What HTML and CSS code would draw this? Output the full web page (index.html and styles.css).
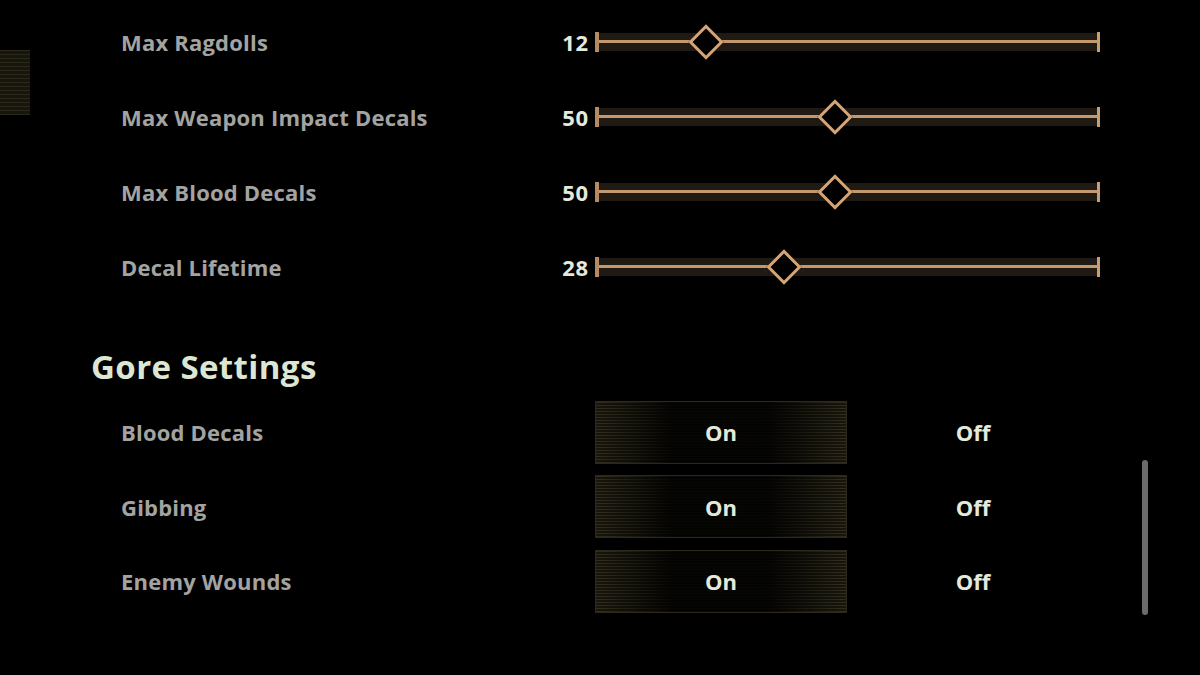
FILE: index.html
```html
<!DOCTYPE html>
<html>
<head>
<meta charset="utf-8">
<link rel="stylesheet" href="styles.css">
</head>
<body>
<div class="side-tab"></div>
<main class="panel">
  <section class="sliders">
    <div class="row">
      <div class="label">Max Ragdolls</div>
      <div class="value">12</div>
      <div class="slider"><div class="track"></div><div class="knob" style="left:21.5%"></div></div>
    </div>
    <div class="row">
      <div class="label">Max Weapon Impact Decals</div>
      <div class="value">50</div>
      <div class="slider"><div class="track"></div><div class="knob" style="left:47.4%"></div></div>
    </div>
    <div class="row">
      <div class="label">Max Blood Decals</div>
      <div class="value">50</div>
      <div class="slider"><div class="track"></div><div class="knob" style="left:47.4%"></div></div>
    </div>
    <div class="row">
      <div class="label">Decal Lifetime</div>
      <div class="value">28</div>
      <div class="slider"><div class="track"></div><div class="knob" style="left:37.1%"></div></div>
    </div>
  </section>
  <h2 class="heading">Gore Settings</h2>
  <section class="toggles">
    <div class="trow">
      <div class="label">Blood Decals</div>
      <div class="opt selected">On</div>
      <div class="opt">Off</div>
    </div>
    <div class="trow">
      <div class="label">Gibbing</div>
      <div class="opt selected">On</div>
      <div class="opt">Off</div>
    </div>
    <div class="trow">
      <div class="label">Enemy Wounds</div>
      <div class="opt selected">On</div>
      <div class="opt">Off</div>
    </div>
  </section>
</main>
<div class="scrollbar"></div>
</body>
</html>
```
FILE: styles.css
```css
html, body {
  margin: 0;
  padding: 0;
  background: #000;
  width: 1200px;
  height: 675px;
  overflow: hidden;
  font-family: "Open Sans", "Lato", sans-serif;
  font-weight: 700;
}

.side-tab {
  position: absolute;
  left: 0;
  top: 50px;
  width: 30px;
  height: 65px;
  background:
    repeating-linear-gradient(to bottom, rgba(60,56,34,0.55) 0 1px, transparent 1px 4px),
    #16150e;
}

.panel {
  padding-top: 4px;
}

.row {
  display: grid;
  grid-template-columns: 424px 38px 505px;
  column-gap: 6px;
  align-items: center;
  height: 75px;
  padding-left: 121px;
}

.label {
  color: #a3a3a1;
  font-size: 22px;
  letter-spacing: 0.2px;
}

.value {
  color: #e3eadb;
  font-size: 22px;
  letter-spacing: 0.8px;
  text-align: right;
}

.slider {
  position: relative;
  height: 20px;
  border-left: 4px solid #b48a62;
  border-right: 3px solid #c79d73;
  box-sizing: border-box;
}

.track {
  position: absolute;
  left: 0;
  right: 0;
  top: 1px;
  height: 18px;
  background: linear-gradient(to bottom, #1f1b14 0 8px, #0a0806 8px 10px, #1f1b14 10px 18px);
}
.track::after {
  content: "";
  position: absolute;
  left: 0;
  right: 0;
  top: 7px;
  height: 3px;
  background: #c4976c;
}

.knob {
  position: absolute;
  top: 50%;
  width: 19px;
  height: 19px;
  border: 3px solid #d4a476;
  background: #000;
  transform: translate(-50%, -50%) rotate(45deg);
}

.heading {
  margin: 43px 0 8px 91px;
  color: #dde6d2;
  font-size: 33px;
  line-height: 40px;
  font-weight: 700;
  letter-spacing: 0.4px;
}

.trow {
  display: grid;
  grid-template-columns: 474px 252px 252px;
  align-items: center;
  height: 74.5px;
  padding-left: 121px;
}

.opt {
  height: 63px;
  display: flex;
  align-items: center;
  justify-content: center;
  color: #e3eadb;
  font-size: 22px;
  box-sizing: border-box;
}

.opt.selected {
  border: 1px solid #2c2919;
  background:
    linear-gradient(to right, rgba(0,0,0,0) 0%, rgba(0,0,0,0.85) 30%, rgba(0,0,0,0.85) 70%, rgba(0,0,0,0) 100%),
    repeating-linear-gradient(to bottom, rgba(70,64,38,0.6) 0 1px, transparent 1px 3px),
    #17150d;
}

.scrollbar {
  position: absolute;
  left: 1142px;
  top: 460px;
  width: 6px;
  height: 155px;
  border-radius: 3px;
  background: #6b6b6b;
}
```
